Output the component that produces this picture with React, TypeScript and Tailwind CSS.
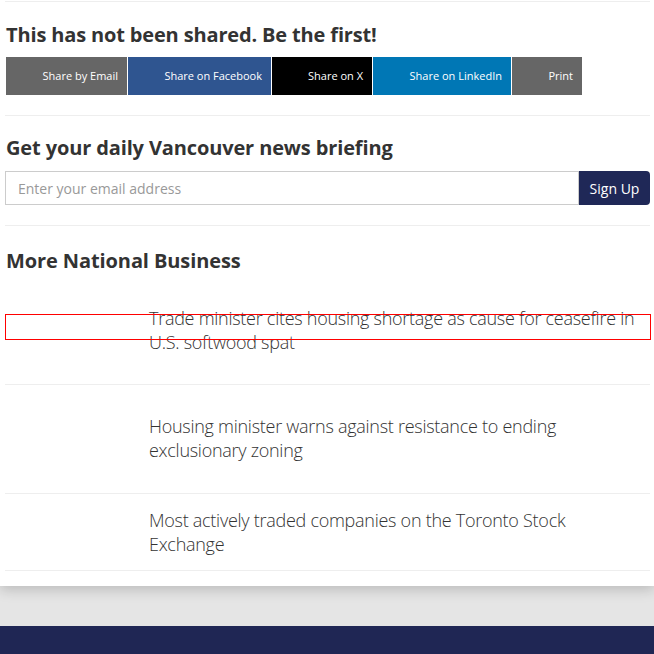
import React from 'react';

const shareButtons = [
  { label: 'Share by Email', bg: 'bg-[#666666]', w: 'w-[121px]' },
  { label: 'Share on Facebook', bg: 'bg-[#2f5590]', w: 'w-[143px]' },
  { label: 'Share on X', bg: 'bg-black', w: 'w-[100px]' },
  { label: 'Share on LinkedIn', bg: 'bg-[#0077b5]', w: 'w-[138px]' },
  { label: 'Print', bg: 'bg-[#666666]', w: 'w-[70px]' },
];

const articles = [
  { title: 'Trade minister cites housing shortage as cause for ceasefire in U.S. softwood spat', pad: 'pb-[30px]' },
  { title: 'Housing minister warns against resistance to ending exclusionary zoning', pad: 'pt-[29px] pb-[31px]' },
  { title: 'Most actively traded companies on the Toronto Stock Exchange', pad: 'pt-[14px] pb-[14px]' },
];

const App = () => {
  return (
    <div className="min-h-[654px] bg-[#e5e5e5] font-['Open_Sans',sans-serif] text-[#333]">
      {/* main card */}
      <div className="relative bg-white pl-[5px] pr-[4px] pt-px pb-[15px] shadow-[0_4px_12px_rgba(0,0,0,0.18)]">
        <div className="border-t border-[#eeeeee]" />

        {/* share section */}
        <div className="pb-5 pt-[18px]">
          <h2 className="pl-px text-[20px] font-bold leading-[30px] tracking-[-0.15px] text-[#333]">
            This has not been shared. Be the first!
          </h2>
          <div className="mt-[7px] flex gap-px pl-px">
            {shareButtons.map((b) => (
              <a
                key={b.label}
                className={`${b.bg} ${b.w} flex h-[38px] items-center justify-end pr-[9px] pt-px text-[11px] text-white`}
              >
                {b.label}
              </a>
            ))}
          </div>
        </div>

        {/* newsletter */}
        <div className="border-t border-[#eeeeee] pt-[17px] pb-5">
          <h2 className="pl-px text-[20px] font-bold leading-[30px] tracking-[-0.13px] text-[#333]">
            Get your daily Vancouver news briefing
          </h2>
          <div className="mt-[8px] flex h-[34px]">
            <input
              className="h-full flex-1 border border-[#cccccc] px-3 text-[14px] text-[#333] placeholder:text-[#999] outline-none"
              placeholder="Enter your email address"
            />
            <button className="h-full w-[71px] rounded-r-[4px] bg-[#1f2857] text-[14px] text-white">
              Sign Up
            </button>
          </div>
        </div>

        {/* more national business */}
        <div className="border-t border-[#eeeeee] pt-[20px]">
          <h2 className="pl-px text-[20px] font-bold leading-[30px] tracking-[-0.1px] text-[#333]">
            More National Business
          </h2>
          <div className="mt-[30px]">
            {articles.map((a) => (
              <div key={a.title} className={`flex border-b border-[#eeeeee] ${a.pad}`}>
                <div className="w-[144px] shrink-0" />
                <a className="pr-[10px] text-[18px] font-light leading-[24px] tracking-[-0.27px] text-[#333]">{a.title}</a>
              </div>
            ))}
          </div>
          {/* highlight outline over first headline */}
          <div className="pointer-events-none absolute left-[5px] top-[314px] h-[26px] w-[646px] border border-[#ff0000]" />
        </div>
      </div>
      <div className="h-[40px]" />
      <div className="h-[28px] bg-[#1f2654]" />
    </div>
  );
};

export default App;
